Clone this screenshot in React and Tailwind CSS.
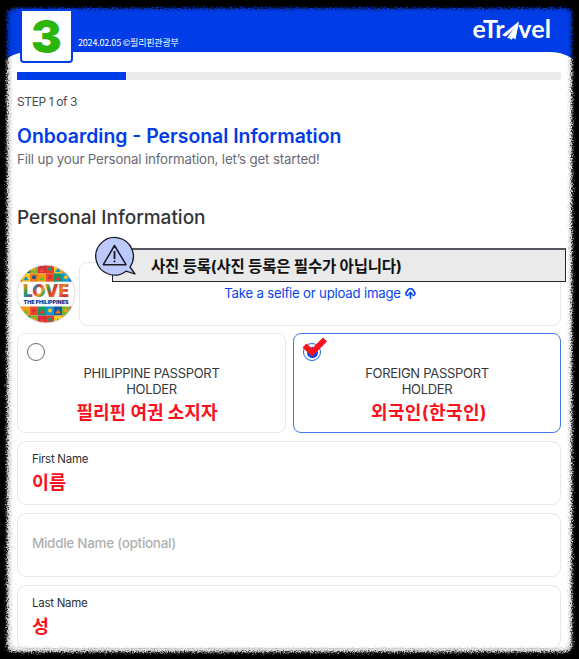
import React, { useState } from 'react'

const TILE_COLORS = ['#1597c9', '#f59b16', '#e23b31', '#1456a4', '#ee4b27', '#fdc51d', '#73b72b', '#139a65', '#ef7d1a', '#d52d45']

function TravelLogo() {
  return (
    <div
      aria-label="eTravel"
      className="flex items-center font-['Lato'] text-[25px] leading-[26px] font-bold text-white"
    >
      <span className="tracking-[-0.2px]">eTr</span>
      <svg width="18" height="20" viewBox="0 0 18 20" className="mt-1.5 -mr-0.5 -ml-0.5">
        <path d="M16.5 1 0.5 14Q3 16.5 6 13.5L13 6 5.5 17Q8 16 9 18.5L12 16 12.5 14Z" fill="white" stroke="white" strokeWidth="0.6" />
        <path d="M17 1 9 15.5 13.5 18.5Z" fill="white" />
      </svg>
      <span className="tracking-[0.1px]">vel</span>
    </div>
  )
}

function LoveBadge() {
  return (
    <svg width="60" height="60" viewBox="0 0 60 60" className="shrink-0">
      <defs>
        <clipPath id="badge">
          <circle cx="30" cy="30" r="29" />
        </clipPath>
        <linearGradient id="love" x1="0" x2="1" y2="0.35">
          <stop offset="0" stopColor="#e5352c" />
          <stop offset=".12" stopColor="#ef8a17" />
          <stop offset=".22" stopColor="#3a9c44" />
          <stop offset=".32" stopColor="#1682b8" />
          <stop offset=".42" stopColor="#e63a2e" />
          <stop offset=".52" stopColor="#f0a31a" />
          <stop offset=".62" stopColor="#249551" />
          <stop offset=".74" stopColor="#e5352c" />
          <stop offset=".88" stopColor="#f08a19" />
          <stop offset="1" stopColor="#d93431" />
        </linearGradient>
      </defs>
      <g clipPath="url(#badge)">
        <rect width="60" height="60" fill="white" />
        {[0, 1, 4, 5].map((row) =>
          Array.from({ length: 8 }, (_, col) => {
            const x = col * 8 - 2
            const y = row < 2 ? 1 + row * 8.3 : 42.5 + (row - 4) * 9
            const color = TILE_COLORS[(col * 3 + row * 2) % 10]
            const accent = TILE_COLORS[(col * 3 + row * 2 + 5) % 10]
            return (
              <g key={`${row}-${col}`}>
                <rect x={x} y={y} width="8.1" height={row < 2 ? 8.4 : 9.1} fill={color} />
                {col % 2 ? (
                  <path d={`M${x + 1} ${y + 7}l3-4 3 4z`} fill={accent} />
                ) : (
                  <circle cx={x + 4} cy={y + 4} r="2" fill={accent} />
                )}
              </g>
            )
          })
        )}
        <text x="7" y="33" textLength="46" lengthAdjust="spacingAndGlyphs" fontFamily="Inter, sans-serif" fontSize="18" fontWeight="900" fill="url(#love)">
          LOVE
        </text>
        <text x="7.5" y="39.8" textLength="45" lengthAdjust="spacingAndGlyphs" fontFamily="Inter, sans-serif" fontSize="5.4" fontWeight="900" fill="#28358b">
          THE PHILIPPINES
        </text>
      </g>
      <circle cx="30" cy="30" r="29" fill="none" stroke="#e0e0e4" />
    </svg>
  )
}

function Notice() {
  return (
    <div className="absolute top-[248px] left-[112px] flex h-[34px] w-[454px] items-center border-[1.5px] border-t-2 border-[#24252f] border-t-[#55575f] bg-[#e9eae9] pt-[3px] pl-[38px]">
      <span className="text-[15.5px] font-bold tracking-[-0.18px] whitespace-nowrap text-[#111]">
        사진 등록(사진 등록은 필수가 아닙니다)
      </span>
      <svg width="46" height="44" viewBox="-1 -2 46 44" className="absolute -top-[15px] -left-[20px]">
        <path
          d="M36 30 41 37 32 34.2A18.8 18.8 0 1 1 36 30Z"
          fill="#bdc9fb"
          stroke="#161a25"
          strokeWidth="1.3"
          strokeLinejoin="round"
        />
        <path d="M20.5 8.5 32 27.7H9.3z" fill="none" stroke="#161a25" strokeWidth="1.5" strokeLinejoin="round" />
        <path d="M20.5 14v8m0 1.6v1.6" stroke="#161a25" strokeWidth="1.8" />
      </svg>
    </div>
  )
}

function HolderCard({ title, note, noteClass, selected, onSelect }) {
  return (
    <button
      type="button"
      onClick={onSelect}
      className={`relative flex h-[100px] flex-col items-center rounded-[8px] border pt-[32px] ${
        selected ? 'border-[#4776ed]' : 'border-[#e7e8ec]'
      }`}
    >
      <span
        className={`absolute top-[9px] left-[9px] flex size-[18px] items-center justify-center rounded-full border ${
          selected ? 'border-[#2461e7]' : 'border-[#66676b]'
        }`}
      >
        {selected && <span className="size-[11px] rounded-full bg-[#0744ed]" />}
      </span>
      {selected && (
        <svg width="26" height="22" viewBox="0 0 26 22" className="absolute top-[2px] left-[8px]">
          <path d="m2.5 9.5 7.5 7L23 3.5" fill="none" stroke="#fb101c" strokeWidth="5.6" />
        </svg>
      )}
      <span className="text-[13px] leading-[15.5px] tracking-[-0.3px] text-[#38393d]">
        {title}
        <br />
        HOLDER
      </span>
      <span className={`mt-1 leading-6 font-bold whitespace-nowrap text-[#fb101c] ${noteClass}`}>{note}</span>
    </button>
  )
}

function NameField({ label, note, optional }) {
  if (optional) {
    return (
      <div className="flex h-16 items-center rounded-[9px] border border-[#e7e8ec] pl-[14px] text-[13.5px] font-medium tracking-[-0.3px] text-[#b0b0b2]">
        <span className="-mt-1">{label}</span>
      </div>
    )
  }
  return (
    <div className="h-16 rounded-[9px] border border-[#e7e8ec] pt-[9px] pl-[14px]">
      <div className="text-[11.5px] leading-4 tracking-[-0.27px] text-[#303135]">{label}</div>
      <div className="mt-[3px] text-[18.5px] leading-6 font-bold text-[#fb101c]">{note}</div>
    </div>
  )
}

// rough black border painted over the page edges
function RoughFrame() {
  return (
    <svg width="579" height="659" className="pointer-events-none absolute inset-0">
      <defs>
        <filter id="rough" x="-20" y="-20" width="619" height="699" filterUnits="userSpaceOnUse" colorInterpolationFilters="sRGB">
          <feGaussianBlur in="SourceGraphic" stdDeviation="1" result="edge" />
          <feTurbulence type="fractalNoise" baseFrequency="0.7" numOctaves="2" seed="7" />
          <feDisplacementMap in="edge" scale="7" xChannelSelector="R" yChannelSelector="G" />
        </filter>
      </defs>
      <g filter="url(#rough)" fillRule="evenodd">
        <path d="M-20-20H599V679H-20zM19 10H562Q569 10 569 17V640Q569 648 561 648H19Q11 648 11 640V17Q11 10 19 10Z" fill="#000" fillOpacity=".15" />
        <path d="M-20-20H599V679H-20zM14 8H565Q572 8 572 15V645Q572 652 565 652H14Q7 652 7 645V15Q7 8 14 8Z" fill="#000" />
      </g>
    </svg>
  )
}

function App() {
  const [holder, setHolder] = useState('foreign')

  return (
    <div className="relative h-[659px] w-[579px] overflow-hidden bg-[#003de6] font-['Inter','Noto_Sans_CJK_KR',sans-serif]">
      <header className="flex h-[52px] items-start">
        <div className="relative z-10 mt-[9px] ml-[20px] flex h-[54px] w-[53px] shrink-0 items-center justify-center rounded-b-[4px] border-2 border-[#003de6] bg-white">
          <span className="text-[46px] leading-[50px] font-black text-[#2cb50c]">3</span>
        </div>
        <span className="mt-[36px] ml-[5px] font-['Noto_Sans_CJK_KR'] text-[9px] leading-[14px] font-normal tracking-[-0.2px] whitespace-nowrap text-white">
          2024.02.05 ©필리핀관광부
        </span>
        <div className="mt-[15px] mr-[28px] ml-auto">
          <TravelLogo />
        </div>
      </header>

      <main className="h-[607px] rounded-t-[30px_18px] bg-white pt-[20px] pr-[18px] pl-[17px]">
        <div className="h-2 bg-[#ebebeb]">
          <div className="h-full w-[109px] bg-[#003de6]" />
        </div>
        <p className="mt-3 text-[12px] leading-5 tracking-[-0.4px] text-[#4a4b50]">STEP 1 of 3</p>
        <h1 className="mt-[11px] text-[19.4px] leading-[26px] font-semibold whitespace-nowrap text-[#003de6]">
          Onboarding - Personal Information
        </h1>
        <p className="text-[13.3px] leading-5 tracking-[-0.15px] whitespace-nowrap text-[#696b74]">
          Fill up your Personal information, let’s get started!
        </p>
        <h2 className="mt-[35px] text-[19px] leading-7 font-medium text-[#333438]">Personal Information</h2>

        <div className="mt-[30px] flex h-16 gap-[3px]">
          <div className="-ml-px flex items-center">
            <LoveBadge />
          </div>
          <div className="flex flex-1 items-start justify-center rounded-[8px] border border-[#e7e8ec] pt-[20px]">
            <button type="button" className="flex items-center gap-[4px] text-[13.2px] leading-5 tracking-[-0.2px] whitespace-nowrap text-[#0744ed]">
              Take a selfie or upload image
              <svg width="11" height="12" viewBox="0 0 11 12" fill="none" stroke="currentColor" strokeWidth="1.6">
                <path d="M3.6 8.5H2.8A2 2 0 0 1 2.2 4.6 3.3 3.3 0 0 1 8.7 4.5 2.1 2.1 0 0 1 8.2 8.5H7.4M5.5 12V5.5M3.5 7.5l2-2 2 2" />
              </svg>
            </button>
          </div>
        </div>

        <div className="mt-[7px] grid grid-cols-[269px_268px] gap-[7px]">
          <HolderCard
            title="PHILIPPINE PASSPORT"
            note="필리핀 여권 소지자"
            noteClass="-ml-[9px] text-[18px]"
            selected={holder === 'philippine'}
            onSelect={() => setHolder('philippine')}
          />
          <HolderCard
            title="FOREIGN PASSPORT"
            note="외국인(한국인)"
            noteClass="ml-[4px] text-[18px] tracking-[0.4px]"
            selected={holder === 'foreign'}
            onSelect={() => setHolder('foreign')}
          />
        </div>

        <div className="mt-2 flex flex-col gap-2">
          <NameField label="First Name" note="이름" />
          <NameField label="Middle Name (optional)" optional />
          <NameField label="Last Name" note="성" />
        </div>
      </main>

      <Notice />
      <RoughFrame />
    </div>
  )
}

export default App
